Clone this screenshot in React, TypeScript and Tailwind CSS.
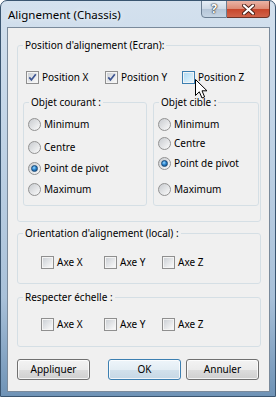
import React from "react";

function Check({ checked, hover }: { checked?: boolean; hover?: boolean }) {
  return (
    <span
      className={`relative flex h-[13px] w-[13px] shrink-0 items-center justify-center border ${
        hover ? "border-[#3c7fb1]" : "border-[#8f8f8f]"
      } bg-[#f4f4f4]`}
    >
      <span
        className={`h-[9px] w-[9px] ${
          hover
            ? "bg-gradient-to-br from-[#b1dcf5] to-[#e4f5fd]"
            : "bg-gradient-to-br from-[#cdd1d6] to-[#f9f9f9]"
        }`}
      />
      {checked ? (
        <svg className="absolute left-0 top-0" width="11" height="11" viewBox="0 0 11 11">
          <path d="M2.3 5.4 L4.4 7.9 L8.8 2.2" fill="none" stroke="#3d5593" strokeWidth="1.7" />
        </svg>
      ) : null}
    </span>
  );
}

function Radio({ checked }: { checked?: boolean }) {
  return (
    <span className="flex h-[13px] w-[13px] shrink-0 items-center justify-center rounded-full border border-[#929292] bg-gradient-to-br from-[#c8cbcf] to-[#fbfbfb]">
      {checked ? (
        <span className="h-[7px] w-[7px] rounded-full border border-[#1a4a78] bg-[radial-gradient(circle_at_40%_35%,#9fdcff_0%,#2a84cf_45%,#0d3e6e_100%)]" />
      ) : null}
    </span>
  );
}

function Group({
  legend,
  className,
  children,
}: {
  legend: string;
  className?: string;
  children: React.ReactNode;
}) {
  return (
    <fieldset className={`min-w-0 rounded-[3px] border border-[#d5dfe5] p-0 ${className ?? ""}`}>
      <legend className="ml-[5px] px-[2px] leading-[14px]">{legend}</legend>
      {children}
    </fieldset>
  );
}

function CheckItem({
  label,
  checked,
  hover,
  className,
}: {
  label: string;
  checked?: boolean;
  hover?: boolean;
  className?: string;
}) {
  return (
    <div className={`flex h-[15px] items-center gap-[3px] ${className ?? ""}`}>
      <Check checked={checked} hover={hover} />
      <span className="leading-[15px]">{label}</span>
    </div>
  );
}

function RadioItem({ label, checked, className }: { label: string; checked?: boolean; className?: string }) {
  return (
    <div className={`flex h-[15px] items-center gap-[3px] ${className ?? ""}`}>
      <Radio checked={checked} />
      <span className="leading-[15px]">{label}</span>
    </div>
  );
}

function Btn({ label, primary }: { label: string; primary?: boolean }) {
  return (
    <button
      type="button"
      className={`h-[21px] w-[73px] rounded-[3px] border leading-[19px] text-black shadow-[inset_0_0_0_1px_rgba(255,255,255,0.75)] ${
        primary
          ? "border-[#3c7fb1] bg-[linear-gradient(#eef5fa_0%,#e3edf4_50%,#d2e1ec_50%,#c5d7e5_100%)]"
          : "border-[#707070] bg-[linear-gradient(#f3f3f3_0%,#ebebeb_50%,#dddddd_50%,#cfcfcf_100%)]"
      }`}
    >
      {label}
    </button>
  );
}

export default function App() {
  return (
    <div className="relative flex h-[397px] w-[276px] flex-col overflow-hidden rounded-t-[7px] border border-[#3a5570] bg-[linear-gradient(180deg,#d4e1ee_0%,#c3d5e7_30%,#a9c1d9_75%,#6f93b6_100%)] font-['Noto_Sans',sans-serif] text-[10px] text-black">
      {/* title bar */}
      <div className="flex h-[26px] shrink-0 items-start justify-between">
        <div className="pl-[7px] pt-[6px] text-[11.5px] leading-[15px] [text-shadow:0_0_6px_#fff]">
          Alignement (Chassis)
        </div>
        <div className="-mt-px mr-[5px] flex">
          <div className="flex h-[18px] w-[26px] items-center justify-center rounded-bl-[4px] border border-[#6b7e92] bg-[linear-gradient(#e6eef6_0%,#cdd9e6_50%,#b4c5d7_50%,#c5d4e3_100%)] text-[12px] font-bold leading-none text-white [text-shadow:0_0_1px_#333,0_0_1px_#333,0_0_2px_#333]">
            ?
          </div>
          <div className="flex h-[18px] w-[43px] items-center justify-center rounded-br-[4px] border border-l-0 border-[#6e3226] bg-[linear-gradient(#eab3a5_0%,#dd8a74_50%,#c7452a_50%,#d0634a_100%)]">
            <svg width="13" height="11" viewBox="0 0 13 11">
              <path d="M2 1.5 L11 9.5 M11 1.5 L2 9.5" stroke="#4a2018" strokeWidth="4" strokeLinecap="round" />
              <path d="M2 1.5 L11 9.5 M11 1.5 L2 9.5" stroke="#ffffff" strokeWidth="2.2" strokeLinecap="round" />
            </svg>
          </div>
        </div>
      </div>

      {/* client area */}
      <div className="ml-[6px] mr-[5px] flex flex-1 flex-col border border-[#7a8a9b] bg-[#f0f0f0]">
        <div className="ml-[9px] mt-[10px] flex w-[244px] flex-col">
          <Group legend="Position d'alignement (Ecran):">
            <div className="flex pl-[8px] pt-[18px]">
              <CheckItem label="Position X" checked className="w-[79px]" />
              <CheckItem label="Position Y" checked className="w-[77px]" />
              <CheckItem label="Position Z" hover />
            </div>
            <div className="mt-[10px] flex gap-[6px] pb-[15px] pl-[5px] pr-[1px]">
              <Group legend="Objet courant :" className="w-[124px]">
                <div className="flex flex-col pb-[8px] pl-[4px] pt-[8px]">
                  <RadioItem label="Minimum" />
                  <RadioItem label="Centre" className="mt-[8px]" />
                  <RadioItem label="Point de pivot" checked className="mt-[6px]" />
                  <RadioItem label="Maximum" className="mt-[6px]" />
                </div>
              </Group>
              <Group legend="Objet cible :" className="w-[106px]">
                <div className="flex flex-col pb-[8px] pl-[4px] pt-[8px]">
                  <RadioItem label="Minimum" />
                  <RadioItem label="Centre" className="mt-[4px]" />
                  <RadioItem label="Point de pivot" checked className="mt-[5px]" />
                  <RadioItem label="Maximum" className="mt-[11px]" />
                </div>
              </Group>
            </div>
          </Group>

          <Group legend="Orientation d'alignement (local) :" className="mt-[4px]">
            <div className="flex pb-[13px] pl-[23px] pt-[15px]">
              <CheckItem label="Axe X" className="w-[63px]" />
              <CheckItem label="Axe Y" className="w-[58px]" />
              <CheckItem label="Axe Z" />
            </div>
          </Group>

          <Group legend="Respecter échelle :" className="mt-[6px]">
            <div className="flex pb-[14px] pl-[23px] pt-[13px]">
              <CheckItem label="Axe X" className="w-[63px]" />
              <CheckItem label="Axe Y" className="w-[58px]" />
              <CheckItem label="Axe Z" />
            </div>
          </Group>

          <div className="mt-[12px] flex">
            <Btn label="Appliquer" />
            <div className="ml-[18px]">
              <Btn label="OK" primary />
            </div>
            <div className="ml-[5px]">
              <Btn label="Annuler" />
            </div>
          </div>
        </div>
      </div>
      <div className="h-[4px] shrink-0" />

      {/* mouse pointer */}
      <svg className="absolute left-[194px] top-[78px]" width="14" height="21" viewBox="0 0 14 21">
        <path
          d="M0.5 0.5 L0.5 16.5 L4.3 12.8 L7 19 L9.6 17.9 L7 11.8 L12 11.8 Z"
          fill="#ffffff"
          stroke="#000000"
          strokeWidth="1"
          strokeLinejoin="round"
        />
      </svg>
    </div>
  );
}
